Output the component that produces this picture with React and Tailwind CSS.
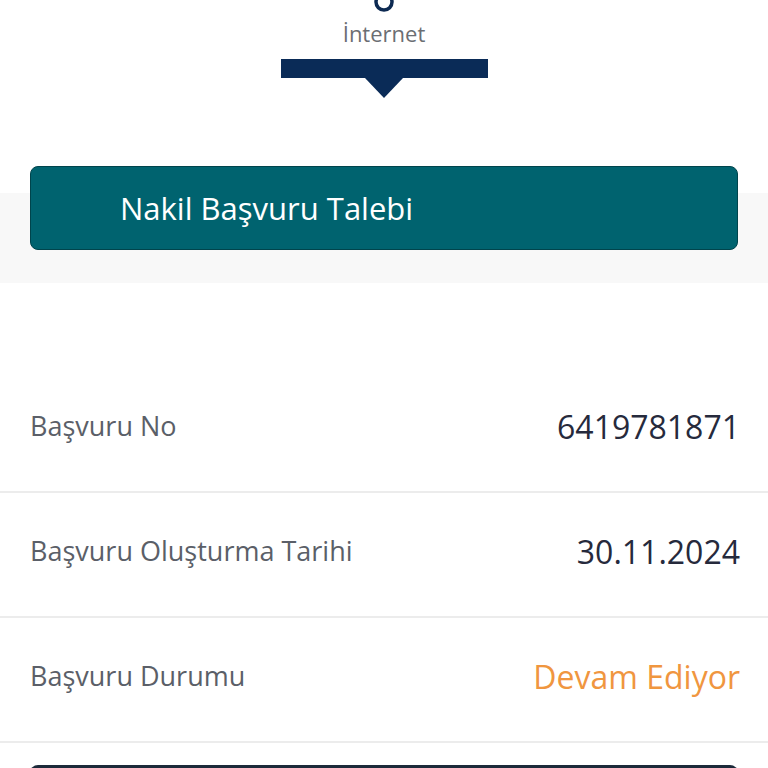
import React from 'react';

const rows = [
  { label: 'Başvuru No', value: '6419781871', tone: 'text-[#262a3c]' },
  { label: 'Başvuru Oluşturma Tarihi', value: '30.11.2024', tone: 'text-[#262a3c]' },
  { label: 'Başvuru Durumu', value: 'Devam Ediyor', tone: 'text-[#f0963f]' },
];

function StepIndicator() {
  return (
    <div className="flex h-[98px] flex-col items-center overflow-hidden">
      <svg width="26" height="14" viewBox="0 0 26 14" className="shrink-0">
        <circle cx="13" cy="2" r="8" fill="none" stroke="#0d2a52" strokeWidth="3.5" />
      </svg>
      <div className="mt-[6px] text-[22px] leading-[26px] text-[#6b6e73]">İnternet</div>
      <div className="mt-[13px] h-[19px] w-[207px] bg-[#0a2b57]" />
      <div className="h-0 w-0 border-x-[19px] border-t-[20px] border-x-transparent border-t-[#0a2b57]" />
    </div>
  );
}

export default function App() {
  return (
    <div className="min-h-screen w-full overflow-hidden bg-white font-['Open_Sans',sans-serif]">
      <StepIndicator />

      {/* header band, grey strip starts part way down the button */}
      <div className="bg-[linear-gradient(to_bottom,#ffffff_95px,#f8f8f8_95px)] px-[30px] pb-[33px] pt-[68px]">
        <div className="flex h-[84px] items-center rounded-[8px] border border-[#00444c] bg-[#00636f] pl-[89px] text-[31px] text-white">
          Nakil Başvuru Talebi
        </div>
      </div>

      <div className="pt-[85px]">
        {rows.map((r) => (
          <div
            key={r.label}
            className="flex h-[125px] items-center justify-between border-b-2 border-[#ececec] pl-[30px] pr-[28px] pb-[6px]"
          >
            <span className="text-[27px] text-[#5b5f68]">{r.label}</span>
            <span className={`text-[32px] ${r.tone}`}>{r.value}</span>
          </div>
        ))}
      </div>

      <div className="px-[30px] pt-[22px]">
        <div className="h-[60px] rounded-[8px] bg-[#1c2a3a]" />
      </div>
    </div>
  );
}
